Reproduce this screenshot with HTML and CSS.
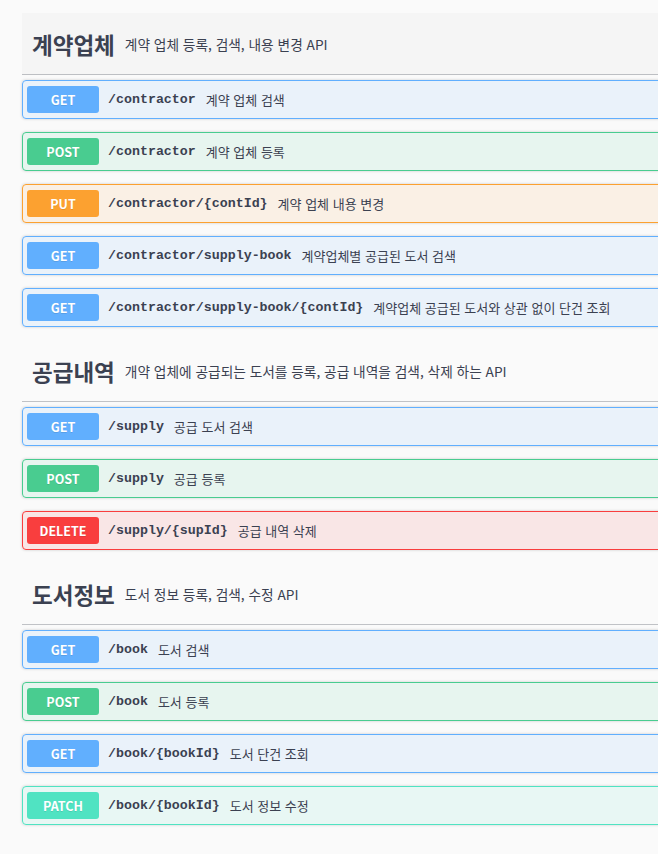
FILE: index.html
```html
<!DOCTYPE html>
<html lang="ko">
<head>
<meta charset="utf-8">
<title>API</title>
<link rel="stylesheet" href="styles.css">
</head>
<body>
<div class="wrap">
  <section class="tag-section">
    <h3 class="tag hover"><span class="tag-name">계약업체</span><small class="tag-desc">계약 업체 등록, 검색, 내용 변경 API</small></h3>
    <div class="op get"><span class="method">GET</span><span class="path">/contractor</span><span class="desc">계약 업체 검색</span></div>
    <div class="op post"><span class="method">POST</span><span class="path">/contractor</span><span class="desc">계약 업체 등록</span></div>
    <div class="op put"><span class="method">PUT</span><span class="path">/contractor/{contId}</span><span class="desc">계약 업체 내용 변경</span></div>
    <div class="op get"><span class="method">GET</span><span class="path">/contractor/supply-book</span><span class="desc">계약업체별 공급된 도서 검색</span></div>
    <div class="op get"><span class="method">GET</span><span class="path">/contractor/supply-book/{contId}</span><span class="desc">계약업체 공급된 도서와 상관 없이 단건 조회</span></div>
  </section>
  <section class="tag-section">
    <h3 class="tag"><span class="tag-name">공급내역</span><small class="tag-desc">개약 업체에 공급되는 도서를 등록, 공급 내역을 검색, 삭제 하는 API</small></h3>
    <div class="op get"><span class="method">GET</span><span class="path">/supply</span><span class="desc">공급 도서 검색</span></div>
    <div class="op post"><span class="method">POST</span><span class="path">/supply</span><span class="desc">공급 등록</span></div>
    <div class="op delete"><span class="method">DELETE</span><span class="path">/supply/{supId}</span><span class="desc">공급 내역 삭제</span></div>
  </section>
  <section class="tag-section">
    <h3 class="tag"><span class="tag-name">도서정보</span><small class="tag-desc">도서 정보 등록, 검색, 수정 API</small></h3>
    <div class="op get"><span class="method">GET</span><span class="path">/book</span><span class="desc">도서 검색</span></div>
    <div class="op post"><span class="method">POST</span><span class="path">/book</span><span class="desc">도서 등록</span></div>
    <div class="op get"><span class="method">GET</span><span class="path">/book/{bookId}</span><span class="desc">도서 단건 조회</span></div>
    <div class="op patch"><span class="method">PATCH</span><span class="path">/book/{bookId}</span><span class="desc">도서 정보 수정</span></div>
  </section>
</div>
</body>
</html>
```
FILE: styles.css
```css
html, body {
  margin: 0;
  padding: 0;
  background: #fafafa;
  overflow: hidden;
}
body {
  font-family: "Noto Sans CJK KR", "Noto Sans", sans-serif;
  color: #3b4151;
}
.wrap {
  padding: 13px 0 0 22px;
  width: 720px;
}
.tag {
  display: flex;
  align-items: center;
  box-sizing: border-box;
  height: 62px;
  margin: 0 0 5px;
  padding: 0 20px 0 10px;
  border-bottom: 1px solid rgba(59, 65, 81, 0.3);
  font-size: 22.5px;
  font-weight: 700;
}
.tag.hover {
  background: rgba(0, 0, 0, 0.02);
}
.tag-desc {
  font-size: 13.7px;
  font-weight: 400;
  margin-left: 10px;
}
.op {
  display: flex;
  align-items: center;
  box-sizing: border-box;
  height: 39px;
  margin: 0 0 13px;
  padding: 0 4px;
  border: 1px solid;
  border-radius: 4px;
  box-shadow: 0 0 3px rgba(0, 0, 0, 0.19);
}
.method {
  width: 72px;
  height: 27px;
  line-height: 27px;
  border-radius: 3px;
  color: #fff;
  font-size: 12.5px;
  font-weight: 700;
  text-align: center;
  text-shadow: 0 1px 0 rgba(0, 0, 0, 0.1);
}
.path {
  margin-left: 9px;
  font-family: "Liberation Mono", "DejaVu Sans Mono", monospace;
  font-size: 13.3px;
  font-weight: 700;
  color: #3b4151;
}
.desc {
  margin-left: 10px;
  font-size: 13px;
  color: #3b4151;
}
.get { border-color: #61affe; background: rgba(97, 175, 254, 0.1); }
.get .method { background: #61affe; }
.post { border-color: #49cc90; background: rgba(73, 204, 144, 0.1); }
.post .method { background: #49cc90; }
.put { border-color: #fca130; background: rgba(252, 161, 48, 0.1); }
.put .method { background: #fca130; }
.delete { border-color: #f93e3e; background: rgba(249, 62, 62, 0.1); }
.delete .method { background: #f93e3e; }
.patch { border-color: #50e3c2; background: rgba(80, 227, 194, 0.1); }
.patch .method { background: #50e3c2; }
```
